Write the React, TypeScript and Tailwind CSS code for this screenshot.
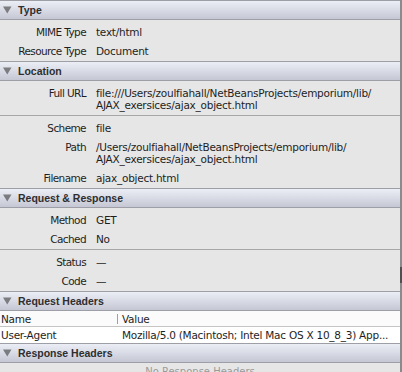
import React from 'react'

type Row = { label: string; value: string[] }

const font = { fontFamily: '"DejaVu Sans", "Liberation Sans", sans-serif' }

function SectionHeader({ title }: { title: string }) {
  return (
    <div className="flex h-[20px] items-center border-y border-[#9d9ea6] bg-gradient-to-b from-[#eceef6] to-[#c5c7d4] pl-[3px]">
      <svg width="9" height="8" viewBox="0 0 9 8" className="mr-[6px] shrink-0">
        <polygon points="0,0.5 8.5,0.5 4.25,7.5" fill="#7b7c80" />
      </svg>
      <span className="font-['Liberation_Sans',Arial,sans-serif] text-[10.5px] leading-[12px] font-bold text-[#2e2e30]">
        {title}
      </span>
    </div>
  )
}

function PropRow({ row }: { row: Row }) {
  return (
    <div className="flex pt-[3px] pb-[4px] text-[10.5px] leading-[12px] text-[#1e1e1e]">
      <div className="w-[86px] shrink-0 text-right tracking-[-0.6px] whitespace-nowrap">{row.label}</div>
      <div className="ml-[10px] flex flex-col tracking-[-0.25px] whitespace-nowrap">
        {row.value.map((line, i) => (
          <span key={i}>{line}</span>
        ))}
      </div>
    </div>
  )
}

function Group({ rows, divider }: { rows: Row[]; divider?: boolean }) {
  return (
    <div className={divider ? 'border-t border-[#a7a7a7] pt-[3px]' : 'pt-[3px]'}>
      {rows.map((r) => (
        <PropRow key={r.label} row={r} />
      ))}
    </div>
  )
}

export default function App() {
  return (
    <div className="relative flex h-[372px] w-[402px] items-start overflow-hidden bg-[#e6e6e6]" style={font}>
      <div className="w-[400px] shrink-0">
        <SectionHeader title="Type" />
        <Group
          rows={[
            { label: 'MIME Type', value: ['text/html'] },
            { label: 'Resource Type', value: ['Document'] },
          ]}
        />

        <SectionHeader title="Location" />
        <Group
          rows={[
            {
              label: 'Full URL',
              value: ['file:///Users/zoulfiahall/NetBeansProjects/emporium/lib/', 'AJAX_exersices/ajax_object.html'],
            },
          ]}
        />
        <Group
          divider
          rows={[
            { label: 'Scheme', value: ['file'] },
            {
              label: 'Path',
              value: ['/Users/zoulfiahall/NetBeansProjects/emporium/lib/', 'AJAX_exersices/ajax_object.html'],
            },
            { label: 'Filename', value: ['ajax_object.html'] },
          ]}
        />

        <SectionHeader title="Request & Response" />
        <Group
          rows={[
            { label: 'Method', value: ['GET'] },
            { label: 'Cached', value: ['No'] },
          ]}
        />
        <Group
          divider
          rows={[
            { label: 'Status', value: ['—'] },
            { label: 'Code', value: ['—'] },
          ]}
        />

        <SectionHeader title="Request Headers" />
        {/* header table */}
        <div className="flex h-[16px] items-center border-b border-[#c4c4c4] bg-[#fbfbfb] text-[10.5px] leading-[12px] tracking-[-0.25px] text-[#1e1e1e]">
          <div className="w-[117px] shrink-0 pl-[1px]">Name</div>
          <div className="h-[10px] w-px bg-[#a0a0a0]" />
          <div className="pl-[4px]">Value</div>
        </div>
        <div className="flex h-[16px] items-center bg-white text-[10.5px] leading-[12px] tracking-[-0.25px] whitespace-nowrap text-[#1e1e1e]">
          <div className="w-[118px] shrink-0 pl-[1px]">User-Agent</div>
          <div className="pl-[4px]">Mozilla/5.0 (Macintosh; Intel Mac OS X 10_8_3) App...</div>
        </div>

        <SectionHeader title="Response Headers" />
        <div className="pt-[3px] text-center text-[10px] leading-[12px] text-[#9a9a9a]">No Response Headers</div>
      </div>
      <div className="h-full w-[2px] shrink-0 bg-[#8a8a8c]" />
      <div className="absolute top-[267px] right-0 h-[16px] w-[2px] bg-[#4f4f4f]" />
    </div>
  )
}
